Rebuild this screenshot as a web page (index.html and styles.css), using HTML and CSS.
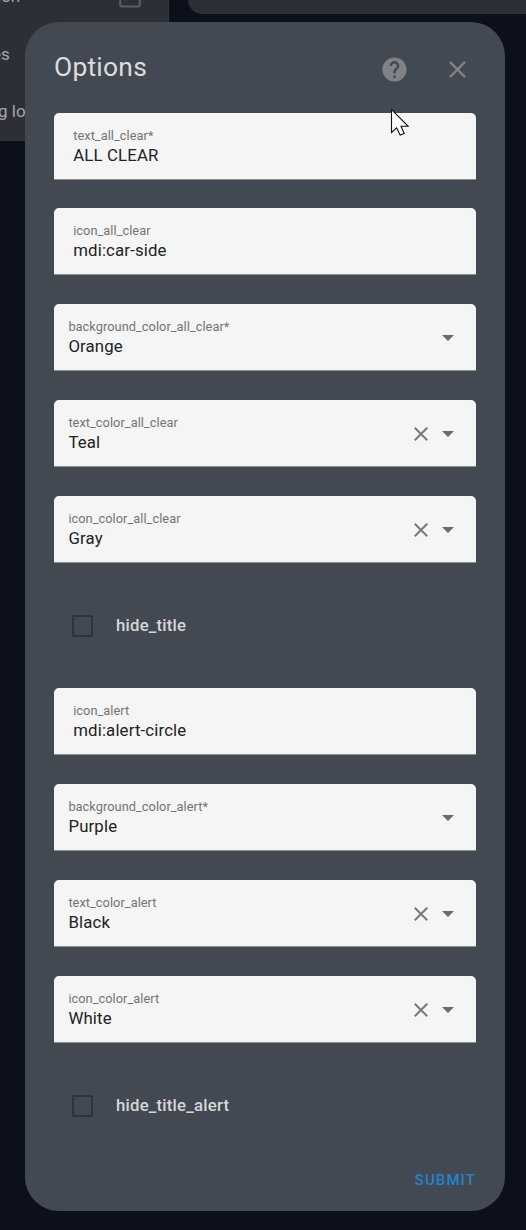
FILE: index.html
```
<!DOCTYPE html>
<html lang="en">
<head>
<meta charset="utf-8">
<title>Options</title>
<link rel="stylesheet" href="styles.css">
</head>
<body>
<svg class="defs" width="0" height="0" aria-hidden="true">
  <symbol id="close" viewBox="0 0 24 24"><path d="M19,6.41L17.59,5L12,10.59L6.41,5L5,6.41L10.59,12L5,17.59L6.41,19L12,13.41L17.59,19L19,17.59L13.41,12L19,6.41Z"/></symbol>
  <symbol id="help" viewBox="0 0 24 24"><path d="M15.07,11.25L14.17,12.17C13.45,12.89 13,13.5 13,15H11V14.5C11,13.39 11.45,12.39 12.17,11.67L13.41,10.41C13.78,10.05 14,9.55 14,9C14,7.89 13.1,7 12,7A2,2 0 0,0 10,9H8A4,4 0 0,1 12,5A4,4 0 0,1 16,9C16,9.88 15.64,10.67 15.07,11.25M13,19H11V17H13M12,2A10,10 0 0,0 2,12A10,10 0 0,0 12,22A10,10 0 0,0 22,12C22,6.47 17.5,2 12,2Z"/></symbol>
  <symbol id="down" viewBox="0 0 10 5"><path d="M0,0L5,5L10,0Z"/></symbol>
</svg>
<div class="page">
  <div class="card side-card">
    <div class="side-row row-one"><span>ion</span></div>
    <div class="side-row row-two">es</div>
    <div class="side-row row-three">g lo</div>
    <svg class="box-icon" viewBox="0 0 22 22"><path d="M1.2 0V18.5Q1.2 20.5 3.2 20.5H18.8Q20.8 20.5 20.8 18.5V0M6 14L9 11" fill="none" stroke="currentColor" stroke-width="2"/></svg>
  </div>
  <div class="card top-card"></div>
</div>
<main class="dialog">
  <header class="header">
    <h1 class="title">Options</h1>
    <svg class="icon help"><use href="#help"/></svg>
    <svg class="icon"><use href="#close"/></svg>
  </header>
  <div class="form">
    <div class="field text-field"><div class="texts"><div class="label">text_all_clear*</div><div class="value">ALL CLEAR</div></div></div>
    <div class="field text-field"><div class="texts"><div class="label">icon_all_clear</div><div class="value">mdi:car-side</div></div></div>
    <div class="field"><div class="texts"><div class="label">background_color_all_clear*</div><div class="value">Orange</div></div><svg class="arrow"><use href="#down"/></svg></div>
    <div class="field"><div class="texts"><div class="label">text_color_all_clear</div><div class="value">Teal</div></div><svg class="clear"><use href="#close"/></svg><svg class="arrow"><use href="#down"/></svg></div>
    <div class="field"><div class="texts"><div class="label">icon_color_all_clear</div><div class="value">Gray</div></div><svg class="clear"><use href="#close"/></svg><svg class="arrow"><use href="#down"/></svg></div>
    <div class="check"><span class="box"></span><span class="check-label">hide_title</span></div>
    <div class="field text-field"><div class="texts"><div class="label">icon_alert</div><div class="value">mdi:alert-circle</div></div></div>
    <div class="field"><div class="texts"><div class="label">background_color_alert*</div><div class="value">Purple</div></div><svg class="arrow"><use href="#down"/></svg></div>
    <div class="field"><div class="texts"><div class="label">text_color_alert</div><div class="value">Black</div></div><svg class="clear"><use href="#close"/></svg><svg class="arrow"><use href="#down"/></svg></div>
    <div class="field"><div class="texts"><div class="label">icon_color_alert</div><div class="value">White</div></div><svg class="clear"><use href="#close"/></svg><svg class="arrow"><use href="#down"/></svg></div>
    <div class="check"><span class="box"></span><span class="check-label">hide_title_alert</span></div>
  </div>
  <footer class="footer"><span class="submit">SUBMIT</span></footer>
</main>
<svg class="cursor" viewBox="0 0 19 28"><path d="M1.5 1.5V24.5L6.6 19.9L10.2 27L14.2 25.5L11 18.3H18.2Z" fill="#fff" stroke="#10131c" stroke-width="1.1"/></svg>
</body>
</html>
```
FILE: styles.css
```
* { box-sizing: border-box; }
body {
  margin: 0;
  height: 1230px;
  padding: 22px 21px 0 25px;
  overflow: hidden;
  position: relative;
  background: #0b101b;
  font-family: Roboto, sans-serif;
}
svg { display: block; fill: currentColor; flex: none; }
.defs { position: absolute; }
.page { position: absolute; inset: 0; color: #a4a6a9; font-size: 17px; }
.card { position: absolute; background: #2c3036; border: 1px solid #31353b; }
.side-card { left: -20px; top: -20px; width: 189px; height: 161px; }
.top-card { left: 188px; top: -30px; width: 360px; height: 44px; border-radius: 14px; }
.side-row { position: absolute; line-height: 20px; white-space: nowrap; }
.row-one { top: 5px; left: 16px; }
.row-two { top: 63px; left: 11px; }
.row-three { top: 120px; left: 17px; }
.box-icon { position: absolute; left: 138px; top: 5px; width: 22px; height: 22px; color: #5b5f65; }

.dialog {
  position: relative;
  width: 480px;
  height: 1189px;
  padding: 0 29px;
  border-radius: 34px;
  background: #434952;
}
.header { display: flex; align-items: center; height: 91px; padding: 3px 4.5px 0 0; color: #808288; }
.title { flex: 1; margin: 0; font-size: 26.4px; font-weight: 400; letter-spacing: 0.25px; line-height: 32px; color: #dcddde; padding-bottom: 5px; }
.icon { width: 29px; height: 29px; }
.help { margin-right: 33.5px; }

.form { display: grid; grid-template-rows: 66px; grid-auto-rows: 67px; row-gap: 29px; }
.field {
  display: flex;
  align-items: center;
  height: 67px;
  padding: 1px 22px 0 14.4px;
  border-bottom: 1px solid #8b8c8c;
  border-radius: 5px 5px 0 0;
  background: #f5f5f5;
}
.text-field { padding-left: 19.2px; }
.texts { flex: 1; padding-top: 1px; }
.label { font-size: 12.8px; letter-spacing: 0.04px; line-height: 16px; color: #747474; }
.value { font-size: 16.8px; letter-spacing: 0.15px; line-height: 22px; color: #222; }
.arrow { width: 12px; height: 6px; color: #6d6d6d; }
.clear { width: 24px; height: 24px; margin: 1px 9px 0 0; color: #77797e; }
.check { display: flex; align-items: center; padding-left: 18px; color: #d6d7d9; }
.box { width: 21px; height: 22px; margin-top: 1px; border: 2px solid #30343a; border-radius: 2px; }
.check-label { margin-left: 23px; font-size: 16.8px; font-weight: 500; letter-spacing: 0.2px; line-height: 22px; padding-bottom: 1px; }
.footer { display: flex; justify-content: flex-end; padding-top: 31px; }
.submit { font-size: 15px; font-weight: 500; letter-spacing: 1.1px; line-height: 20px; color: #2383cc; }
.cursor { position: absolute; left: 390px; top: 108px; width: 19px; height: 28px; }
```
